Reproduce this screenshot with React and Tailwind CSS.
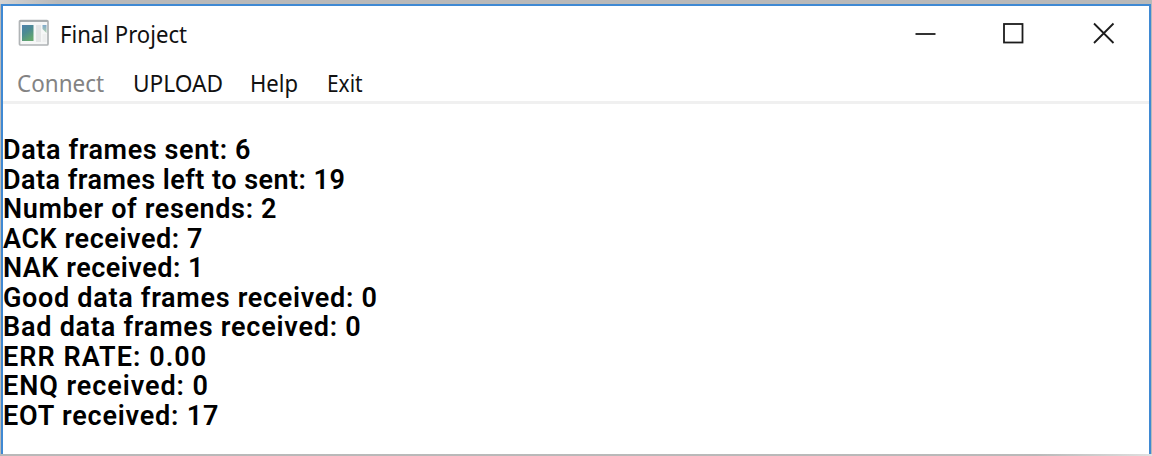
const stats = [
  { text: "Data frames sent: 6", fit: "tracking-[0.61px]" },
  { text: "Data frames left to sent: 19", fit: "tracking-[0.46px]" },
  { text: "Number of resends: 2", fit: "tracking-[0.63px]" },
  { text: "ACK received: 7", fit: "tracking-[0.57px]" },
  { text: "NAK received: 1", fit: "tracking-[0.5px]" },
  { text: "Good data frames received: 0", fit: "tracking-[0.7px]" },
  { text: "Bad data frames received: 0", fit: "tracking-[0.77px]" },
  { text: "ERR RATE: 0.00", fit: "tracking-[1.05px]" },
  { text: "ENQ received: 0", fit: "tracking-[0.93px]" },
  { text: "EOT received: 17", fit: "tracking-[0.8px]" },
];

const menu = [
  { label: "Connect", box: "w-[116px] text-[#838383]", fit: "scale-x-[0.935]" },
  { label: "UPLOAD", box: "w-[117px] text-[#111]", fit: "scale-x-[0.945]" },
  { label: "Help", box: "w-[77px] text-[#111]", fit: "scale-x-[0.92]" },
  { label: "Exit", box: "w-[60px] text-[#111]", fit: "scale-x-[0.87]" },
];

function AppIcon() {
  return (
    <svg className="mt-[13px] h-[28px] w-[32px] shrink-0" viewBox="0 0 32 28">
      <defs>
        <linearGradient id="pane" x1="0" y1="0" x2="0.5" y2="1">
          <stop offset="0" stopColor="#4c80ad" />
          <stop offset="0.5" stopColor="#4c8b91" />
          <stop offset="1" stopColor="#63a66f" />
        </linearGradient>
        <linearGradient id="sidePane" x1="0" y1="0" x2="0" y2="1">
          <stop offset="0" stopColor="#7fa9cc" />
          <stop offset="1" stopColor="#b5d3ae" />
        </linearGradient>
      </defs>
      <rect x="1.5" y="1.5" width="28.5" height="24.5" rx="1" fill="#f6f7f7" stroke="#b0b4b6" strokeWidth="1.7" />
      <path d="M2 2.2H29.5" stroke="#8e9599" strokeWidth="1" />
      <rect x="4" y="6" width="11.5" height="16" fill="url(#pane)" />
      <rect x="18" y="6" width="5" height="17" fill="#e4e5e6" />
      <path d="M24.5 6H28.5V14L24.5 10Z" fill="url(#sidePane)" />
      <rect x="24.5" y="15" width="4" height="8" fill="#eeefef" />
    </svg>
  );
}

export default function App() {
  return (
    <div className="flex h-[456px] w-[1152px] flex-col overflow-hidden bg-[#b9b9b9]">
      <div className="h-[4px] shrink-0 bg-linear-to-r from-[#d4d4d4] via-[#b9b9b9] via-5% to-[#b9b9b9]" />
      <div className="mx-px flex h-[450px] shrink-0 flex-col border-x-2 border-t-2 border-[#3f89d3] bg-white">
        <header className="flex h-[56px] shrink-0">
          <div className="w-[15px] shrink-0" />
          <AppIcon />
          <h1 className="ml-[10px] origin-left scale-x-[0.922] font-['Noto_Sans'] text-[24px] leading-[56px] whitespace-nowrap text-[#111]">
            Final Project
          </h1>
          <svg className="mt-[14px] ml-auto h-[28px] w-[240px] shrink-0" viewBox="-10 0 240 28" fill="none" stroke="#1c1c1c" strokeWidth="1.8">
            <path d="M-3.5 14H16.5" />
            <rect x="85" y="4" width="18.5" height="18.5" />
            <path d="M175 3.5L194.5 23M194.5 3.5L175 23" />
          </svg>
        </header>
        <nav className="flex h-[42px] shrink-0 border-b-[3px] border-[#f0f0f0] pl-[14px] font-['Noto_Sans'] text-[24px] leading-[42px]">
          {menu.map((item) => (
            <div key={item.label} className={item.box}>
              <span className={"inline-block origin-left " + item.fit}>{item.label}</span>
            </div>
          ))}
        </nav>
        <main className="flex flex-col pt-[32px] font-['Roboto'] text-[27px] font-semibold text-black">
          {stats.map((row) => (
            <p key={row.text} className={"h-[29.5px] leading-[29.5px] whitespace-pre " + row.fit}>
              {row.text}
            </p>
          ))}
        </main>
      </div>
      <div className="h-[2px] shrink-0 bg-linear-to-r from-[#b9b9b9] from-90% to-[#e0e0e0]" />
    </div>
  );
}
